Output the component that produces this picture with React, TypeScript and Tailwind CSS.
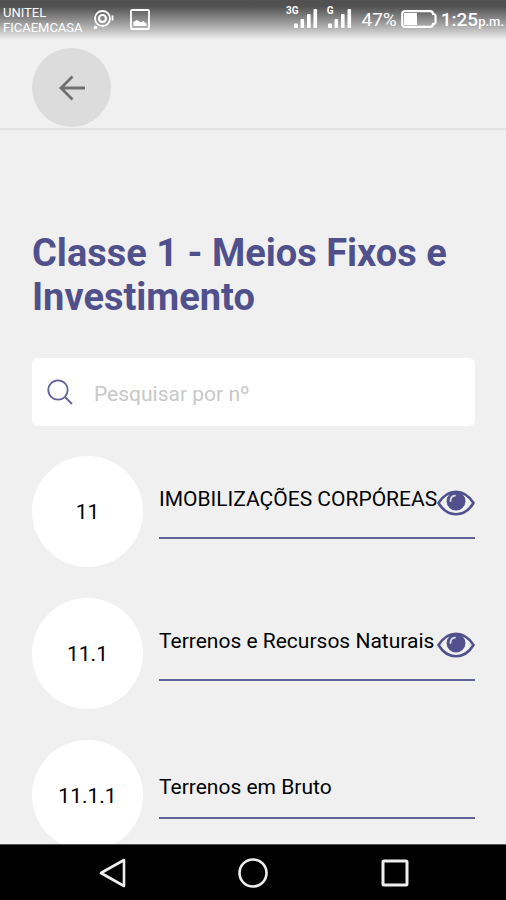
import React, { useState } from 'react';

interface Account {
  code: string;
  name: string;
  hasDetails: boolean;
}

const accounts: Account[] = [
  { code: '11', name: 'IMOBILIZAÇÕES CORPÓREAS', hasDetails: true },
  { code: '11.1', name: 'Terrenos e Recursos Naturais', hasDetails: true },
  { code: '11.1.1', name: 'Terrenos em Bruto', hasDetails: false },
];

function SignalIcon({ label }: { label: string }) {
  return (
    <div className="flex items-start">
      <span className="pt-px text-[10px] leading-3 font-bold">{label}</span>
      <svg width="24" height="20" viewBox="0 0 24 20" fill="currentColor" className="mt-[5px] -ml-[5px]">
        <rect x="0" y="14.500" width="4" height="4.500" rx="1" />
        <rect x="6.500" y="10" width="3.600" height="9" rx="1" />
        <rect x="13" y="5" width="3.600" height="14" rx="1" />
        <rect x="19.500" y="0" width="3.600" height="19" rx="1" />
      </svg>
    </div>
  );
}

function StatusBar() {
  return (
    <div className="h-10 shrink-0 flex justify-between text-white bg-linear-to-b from-[#505050] from-15% to-[#f1f1f1]">
      <div className="flex items-start pl-[3px]">
        <div className="w-[89px] pt-[5px] text-[13px] leading-[15px]">
          <div>UNITEL</div>
          <div>FICAEMCASA</div>
        </div>
        <svg width="22" height="22" viewBox="0 0 22 22" fill="none" stroke="currentColor" className="mt-[9px]">
          <circle cx="10.5" cy="9.5" r="7.5" strokeWidth="1.8" />
          <circle cx="10.5" cy="9.5" r="3.5" strokeWidth="2.2" />
          <path d="M20.5 6.5v5" strokeWidth="1.8" />
          <circle cx="3.5" cy="18.5" r="1.8" fill="currentColor" stroke="none" />
        </svg>
        <svg width="20" height="21" viewBox="0 0 20 21" fill="none" stroke="currentColor" className="mt-[9px] ml-4">
          <rect x="1" y="1" width="18" height="19" rx="1" strokeWidth="1.8" />
          <path d="M3.5 17v-4l3.5-2 4 2.5 2-1.5 3.5 2.5V17z" fill="currentColor" stroke="none" />
        </svg>
      </div>
      <div className="flex items-start pt-1 pr-[2px]">
        <SignalIcon label="3G" />
        <div className="ml-[9px]">
          <SignalIcon label="G" />
        </div>
        <span className="ml-[9px] pt-1 text-[19px] leading-6">47%</span>
        <svg width="36" height="18" viewBox="0 0 36 18" fill="none" stroke="currentColor" className="mt-[6px] ml-1">
          <path
            d="M4 1.2h25q3 0 3 2.8 2.5 0 2.500 2v6q0 2-2.500 2 0 2.800-3 2.800H4q-2.800 0-2.800-2.800V4Q1.200 1.200 4 1.200Z"
            strokeWidth="2.2"
          />
          <rect x="3" y="3" width="13" height="12" fill="currentColor" stroke="none" />
        </svg>
        <span className="ml-1 pt-1 text-[19px] leading-6 font-medium">
          1:25<span className="text-[13px]">p.m.</span>
        </span>
      </div>
    </div>
  );
}

function EyeIcon() {
  return (
    <svg width="38" height="38" viewBox="0 0 38 38" fill="none">
      <path
        d="M1.5 19C6 12 12 7.8 19 7.8S32 12 36.5 19C32 26.5 26 30.2 19 30.2S6 26.5 1.5 19Z"
        stroke="#50508c"
        strokeWidth="2.6"
        strokeLinejoin="round"
      />
      <circle cx="19" cy="17.2" r="9.4" fill="#50508c" />
      <path d="M13.5 17c0-3 1.8-5 4.5-5.3" stroke="#d8d8e6" strokeWidth="1.8" strokeLinecap="round" />
    </svg>
  );
}

function AccountRow({ account }: { account: Account }) {
  return (
    <li className="flex items-center gap-4">
      <div className="size-[111px] shrink-0 rounded-full bg-white flex items-center justify-center">{account.code}</div>
      <div className="flex-1 min-w-0 flex items-start justify-between border-b-2 border-[#62629a] pb-[15px]">
        <span className="whitespace-nowrap">{account.name}</span>
        {account.hasDetails && (
          <button type="button" aria-label={`Ver ${account.name}`} className="shrink-0">
            <EyeIcon />
          </button>
        )}
      </div>
    </li>
  );
}

function NavBar() {
  return (
    <nav className="h-14 shrink-0 bg-black border-t border-[#555] text-[#eee] flex items-center justify-center gap-[110px]">
      <button type="button" aria-label="Voltar">
        <svg width="32" height="32" viewBox="0 0 32 32" fill="none" stroke="currentColor" strokeWidth="2.6">
          <path d="M29 3v26L6 16z" strokeLinejoin="round" />
        </svg>
      </button>
      <button type="button" aria-label="Início">
        <svg width="32" height="32" viewBox="0 0 32 32" fill="none" stroke="currentColor" strokeWidth="2.6">
          <circle cx="16" cy="16" r="13.5" />
        </svg>
      </button>
      <button type="button" aria-label="Recentes">
        <svg width="32" height="32" viewBox="0 0 32 32" fill="none" stroke="currentColor" strokeWidth="3">
          <rect x="4" y="4" width="24" height="24" rx="1" />
        </svg>
      </button>
    </nav>
  );
}

function App() {
  const [search, setSearch] = useState('');

  const filtered = accounts.filter((account) => account.code.startsWith(search.trim()));

  return (
    <div className="h-screen flex flex-col overflow-hidden bg-[#f0f0f0] font-[Roboto,sans-serif] text-black">
      <StatusBar />
      <header className="shrink-0 px-8 pt-2 pb-px border-b-2 border-[#e3e3e3]">
        <button
          type="button"
          aria-label="Voltar"
          className="size-[79px] rounded-full bg-[#dcdcdc] flex items-center justify-center"
        >
          <svg width="26" height="26" viewBox="0 0 26 26" fill="none" stroke="#707070" strokeWidth="2.8">
            <path d="M26 13H2.5M13.5 1.5L2 13l11.5 11.5" />
          </svg>
        </button>
      </header>

      <main className="flex-1 min-h-0 overflow-hidden pl-8 pr-[31px] pt-[101px]">
        <h1 className="text-[38px] leading-[44px] font-bold text-[#50508c]">Classe 1 - Meios Fixos e Investimento</h1>

        <label className="mt-[39px] h-[68px] px-[15px] rounded-md bg-white flex items-center">
          <svg width="26" height="26" viewBox="0 0 26 26" fill="none" stroke="#62629a" strokeWidth="1.8">
            <circle cx="11" cy="11" r="9.7" />
            <path d="M18 18l7 7" />
          </svg>
          <input
            type="text"
            aria-label="Pesquisar por nº"
            placeholder="Pesquisar por nº"
            value={search}
            onChange={(e) => setSearch(e.target.value)}
            className="ml-[21px] pt-[3px] flex-1 min-w-0 bg-transparent text-[21px] leading-[30px] outline-none placeholder:text-[#c8c8c8]"
          />
        </label>

        <ul className="mt-[30px] flex flex-col gap-[31px] text-[21px] leading-[30px]">
          {filtered.map((account) => (
            <AccountRow key={account.code} account={account} />
          ))}
        </ul>
      </main>
      <NavBar />
    </div>
  );
}

export default App;
